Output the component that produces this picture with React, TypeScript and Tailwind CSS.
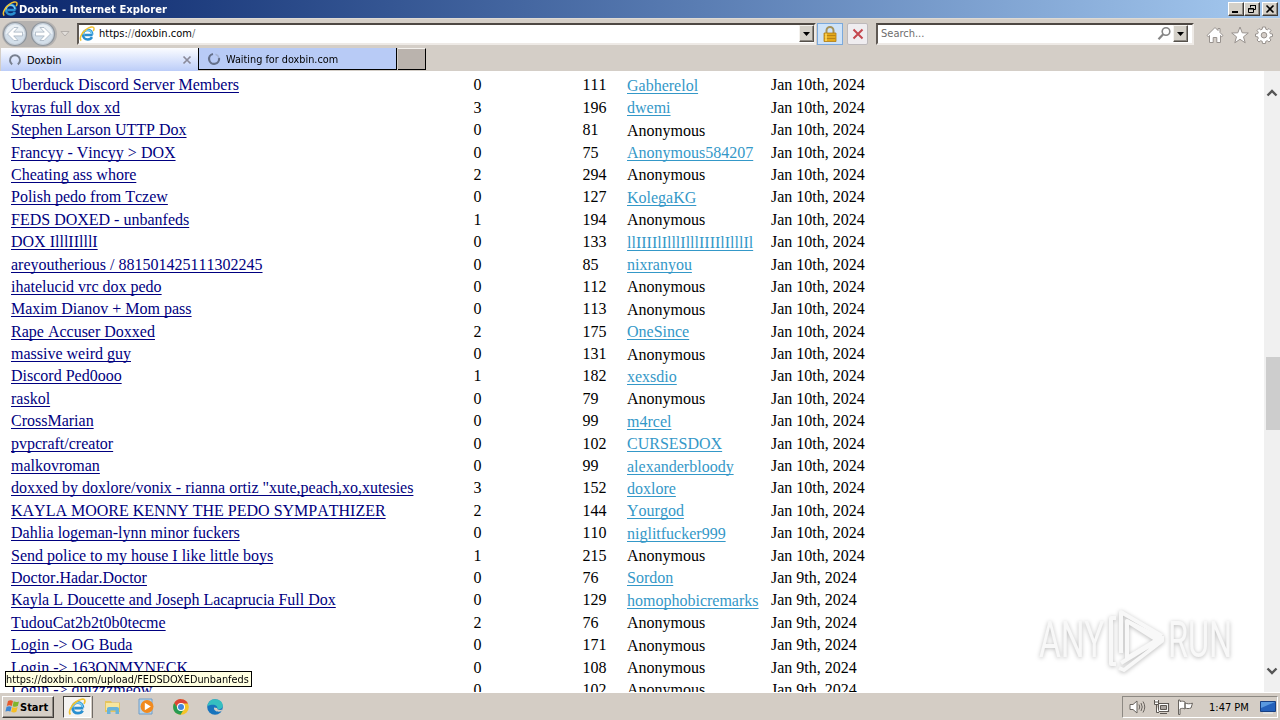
import type { ReactNode } from "react";
import clsx from "clsx";

type Paste = {
  title: string;
  comments: number;
  views: number;
  user?: string;
  date: string;
};

const JAN_10 = "Jan 10th, 2024";
const JAN_9 = "Jan 9th, 2024";

const pastes: Paste[] = [
  { title: "Uberduck Discord Server Members", comments: 0, views: 111, user: "Gabherelol", date: JAN_10 },
  { title: "kyras full dox xd", comments: 3, views: 196, user: "dwemi", date: JAN_10 },
  { title: "Stephen Larson UTTP Dox", comments: 0, views: 81, date: JAN_10 },
  { title: "Francyy - Vincyy > DOX", comments: 0, views: 75, user: "Anonymous584207", date: JAN_10 },
  { title: "Cheating ass whore", comments: 2, views: 294, date: JAN_10 },
  { title: "Polish pedo from Tczew", comments: 0, views: 127, user: "KolegaKG", date: JAN_10 },
  { title: "FEDS DOXED - unbanfeds", comments: 1, views: 194, date: JAN_10 },
  { title: "DOX IlllIIlllI", comments: 0, views: 133, user: "llIIIIlIlllIlllIIIIlIlllIl", date: JAN_10 },
  { title: "areyoutherious / 881501425111302245", comments: 0, views: 85, user: "nixranyou", date: JAN_10 },
  { title: "ihatelucid vrc dox pedo", comments: 0, views: 112, date: JAN_10 },
  { title: "Maxim Dianov + Mom pass", comments: 0, views: 113, date: JAN_10 },
  { title: "Rape Accuser Doxxed", comments: 2, views: 175, user: "OneSince", date: JAN_10 },
  { title: "massive weird guy", comments: 0, views: 131, date: JAN_10 },
  { title: "Discord Ped0ooo", comments: 1, views: 182, user: "xexsdio", date: JAN_10 },
  { title: "raskol", comments: 0, views: 79, date: JAN_10 },
  { title: "CrossMarian", comments: 0, views: 99, user: "m4rcel", date: JAN_10 },
  { title: "pvpcraft/creator", comments: 0, views: 102, user: "CURSESDOX", date: JAN_10 },
  { title: "malkovroman", comments: 0, views: 99, user: "alexanderbloody", date: JAN_10 },
  { title: "doxxed by doxlore/vonix - rianna ortiz \"xute,peach,xo,xutesies", comments: 3, views: 152, user: "doxlore", date: JAN_10 },
  { title: "KAYLA MOORE KENNY THE PEDO SYMPATHIZER", comments: 2, views: 144, user: "Yourgod", date: JAN_10 },
  { title: "Dahlia logeman-lynn minor fuckers", comments: 0, views: 110, user: "niglitfucker999", date: JAN_10 },
  { title: "Send police to my house I like little boys", comments: 1, views: 215, date: JAN_10 },
  { title: "Doctor.Hadar.Doctor", comments: 0, views: 76, user: "Sordon", date: JAN_9 },
  { title: "Kayla L Doucette and Joseph Lacaprucia Full Dox", comments: 0, views: 129, user: "homophobicremarks", date: JAN_9 },
  { title: "TudouCat2b2t0b0tecme", comments: 2, views: 76, date: JAN_9 },
  { title: "Login -> OG Buda", comments: 0, views: 171, date: JAN_9 },
  { title: "Login -> 163ONMYNECK", comments: 0, views: 108, date: JAN_9 },
  { title: "Login -> quizzzmeow", comments: 0, views: 102, date: JAN_9 },
];

function IeLogo({ className }: { className?: string }) {
  return (
    <svg className={className} viewBox="0 0 16 16" fill="none">
      <path d="M13.6 9H5.500M13.300 8.500C13.100 5.800 11.200 4 8.700 4S4 5.900 4 8.700s2 4.800 4.800 4.800c1.900 0 3.400-.8 4.200-2.300" stroke="#2a8fd0" strokeWidth="2.500" />
      <path d="M12.900 8C12.500 5.700 11 4.200 8.600 4.200S4.300 6 4.200 8.400" stroke="#7bd0f4" strokeWidth="1.200" />
      <path d="M2.200 14.600C-.2 12.500 3 6.500 7 3.600c3.300-2.500 7.600-3.700 8-1.400.2 1-.2 2-.8 3" stroke="#f2c230" strokeWidth="1.500" />
    </svg>
  );
}

function Spinner() {
  return (
    <svg className="size-3.5 shrink-0" viewBox="0 0 14 14" fill="none">
      <path d="M4.200 11.300A5 5 0 1 1 9.800 11.300" stroke="#777f8e" strokeWidth="2" />
    </svg>
  );
}

function WaitSpinner() {
  return (
    <svg className="size-3.5 shrink-0" viewBox="0 0 14 14" fill="none">
      <path d="M6 2A5 5 0 1 0 12 6" stroke="#64708a" strokeWidth="2.200" />
      <path d="M8.500 2.300A5 5 0 0 1 12 6" stroke="#a5b3d4" strokeWidth="1.500" />
    </svg>
  );
}

function NavArrow({ flip }: { flip?: boolean }) {
  return (
    <svg className={clsx("size-[26px] shrink-0", flip && "-scale-x-100")} viewBox="0 0 26 26">
      <circle cx="13" cy="13" r="11.500" fill="#c5ced8" stroke="#8e959d" strokeWidth="1.200" />
      <circle cx="13" cy="13" r="10" fill="#d3dfea" />
      <path d="M3.500 13a9.500 9.500 0 0 1 19 0z" fill="#e9eff4" />
      <path d="M5.500 13l6.500-6.500h4l-4.300 4.600H20.500v3.800h-8.800l4.300 4.600H12z" fill="#fff" stroke="#a6b3c0" strokeWidth=".8" />
    </svg>
  );
}

function DropButton() {
  return (
    <div className="flex h-[17px] w-[15px] shrink-0 items-center justify-center border border-t-[#f4f2ee] border-r-[#55504a] border-b-[#55504a] border-l-[#f4f2ee] bg-[#d4d0c8] shadow-[inset_-1px_-1px_0_#8d8983]">
      <svg className="h-1 w-[7px]" viewBox="0 0 7 4">
        <path d="M0 0h7L3.500 4z" fill="#000" />
      </svg>
    </div>
  );
}

function CaptionButton({ children, className }: { children: ReactNode; className?: string }) {
  return (
    <div
      className={clsx(
        "flex h-3.5 w-4 items-center justify-center border border-t-white border-r-[#403c38] border-b-[#403c38] border-l-white bg-[#d4d0c8] shadow-[inset_-1px_-1px_0_#8d8983]",
        className,
      )}
    >
      {children}
    </div>
  );
}

function TitleBar() {
  return (
    <div className="flex h-[18px] items-center bg-linear-to-r from-[#0b256b] to-[#a6caf0] pr-0.5 pl-0.5">
      <IeLogo className="size-4" />
      <span className="ml-px w-[180px] pt-0.5 text-[11px] font-bold whitespace-nowrap text-white">
        <span className="inline-block origin-left scale-x-[1.015]">Doxbin - Internet Explorer</span>
      </span>
      <div className="ml-auto flex">
        <CaptionButton>
          <svg className="h-2.5 w-2.5" viewBox="0 0 10 10">
            <path d="M1 7h6v2H1z" />
          </svg>
        </CaptionButton>
        <CaptionButton>
          <svg className="h-2.5 w-2.5" viewBox="0 0 10 10" fill="none" stroke="#000">
            <path d="M3.500 3.500V1.500h5v4H7M3 1.500h6M1.500 4.500h5v4h-5zM1 5h6" />
          </svg>
        </CaptionButton>
        <CaptionButton className="ml-0.5">
          <svg className="h-2.5 w-2.5" viewBox="0 0 10 10" fill="none" stroke="#000" strokeWidth="1.600">
            <path d="M1.500 1.500l7 7M8.500 1.500l-7 7" />
          </svg>
        </CaptionButton>
      </div>
    </div>
  );
}

function Toolbar() {
  return (
    <div className="flex h-[30px] items-center border-t border-[#dedad4] pl-0.5">
      <div className="flex w-[55px] gap-[2px] rounded-full bg-[#b5b2b0]">
        <NavArrow />
        <NavArrow flip />
      </div>
      <svg className="ml-[3px] h-1.5 w-2.5" viewBox="0 0 10 6">
        <path d="M1 .5h8L5 5z" fill="#e2deda" stroke="#aaa5a1" strokeWidth=".8" />
      </svg>
      <div className="ml-[7px] flex h-[22px] w-[739px] items-center border-2 border-t-[#4e4843] border-r-[#eeeae6] border-b-[#eeeae6] border-l-[#5f5954] bg-white">
        <IeLogo className="size-4" />
        <span className="ml-1 pt-0.5 text-[11px] text-[#777]">
          <span className="text-black">https:</span>//<span className="text-black">doxbin.com</span>/
        </span>
        <div className="ml-auto">
          <DropButton />
        </div>
      </div>
      <div className="ml-px flex h-[22px] w-[26px] items-center justify-center border border-[#7ba9dc] bg-[#cfe3f8]">
        <svg className="h-4 w-3.5" viewBox="0 0 14 16" fill="none">
          <path d="M3.500 8V4.500a3.500 3.500 0 0 1 7 0V8" stroke="#a5925a" strokeWidth="2" />
          <path d="M1 7h12v8.500H1z" fill="#e3a91c" stroke="#b07c12" strokeWidth=".8" />
          <path d="M1.500 9.500h11M1.500 12.500h11" stroke="#ba8415" />
          <path d="M3 7.500v7.500" stroke="#ffdb62" strokeWidth="1.500" />
        </svg>
      </div>
      <div className="ml-1 flex h-[22px] w-[21px] items-center justify-center rounded-xs border border-[#bdb9bb] bg-[#efedf0]">
        <svg className="size-3" viewBox="0 0 12 12">
          <path d="M1.500 1.500l9 9M10.500 1.500l-9 9" stroke="#c4474f" strokeWidth="2" />
        </svg>
      </div>
      <div className="ml-2 flex h-[22px] w-[318px] items-center border-2 border-t-[#4e4843] border-r-[#eeeae6] border-b-[#eeeae6] border-l-[#5f5954] bg-white pr-1">
        <span className="ml-[3px] pt-0.5 text-[11px] text-[#6d6d6d]">Search...</span>
        <svg className="ml-auto size-[15px]" viewBox="0 0 15 15" fill="none" stroke="#858585">
          <circle cx="9" cy="5.500" r="3.800" strokeWidth="1.600" />
          <path d="M6.200 8.300L1.500 13.300" strokeWidth="2.200" />
        </svg>
        <div className="ml-px">
          <DropButton />
        </div>
      </div>
      <div className="mt-[3px] ml-3 flex gap-[6.5px]">
        <svg className="size-[18px]" viewBox="0 0 18 18" fill="#fff" stroke="#98928e">
          <path d="M1 9.500L9 1.500l3 3v-2h2v4l3 3-1.300 1.200-1.200-1.200V16.500h-3.700v-5H7.200v5H3.500v-7l-1.200 1.200z" />
        </svg>
        <svg className="size-[18px]" viewBox="0 0 18 18" fill="#fff" stroke="#98928e">
          <path d="M9 1l2.200 5.800 6.100.2-4.800 3.800 1.700 6L9 13.300l-5.200 3.500 1.700-6L.7 7l6.100-.2z" />
        </svg>
        <svg className="size-[18px]" viewBox="0 0 18 18" fill="#fff" stroke="#98928e">
          <path d="M7.500 1h3l.3 2.200 1.500.6 1.700-1.300 2 2-1.300 1.700.6 1.500 2.200.3v2.500l-2.200.3-.6 1.500 1.300 1.700-2 2-1.700-1.300-1.500.6-.3 2.200h-3l-.3-2.200-1.500-.6L4 16l-2-2 1.300-1.700-.6-1.500L.5 10.500V8l2.200-.3.6-1.500L2 4.500l2-2 1.700 1.300 1.500-.6z" />
          <circle cx="9" cy="9.200" r="2.800" fill="#d4cdc7" />
        </svg>
      </div>
    </div>
  );
}

function TabStrip() {
  return (
    <div className="flex h-[23px] items-stretch pl-px text-[11px]">
      <div className="flex w-[197px] items-center bg-linear-to-b from-[#fbfcff] to-[#bccdf8] pr-1.5 pl-[7px]">
        <Spinner />
        <span className="ml-[5px] pt-[3px]">Doxbin</span>
        <svg className="ml-auto size-2.5" viewBox="0 0 10 10">
          <path d="M1.500 1.500l7 7M8.500 1.500l-7 7" stroke="#8a8a9a" strokeWidth="1.700" />
        </svg>
      </div>
      <div className="flex h-[22px] w-[199px] items-center border-r border-b border-l border-black bg-[#b8cbf6] pl-2">
        <WaitSpinner />
        <span className="ml-[5px] pt-1 whitespace-nowrap">
          <span className="inline-block origin-left scale-x-[.98]">Waiting for doxbin.com</span>
        </span>
      </div>
      <div className="ml-px h-[22px] w-[28px] border-t border-r border-b border-t-[#f4f1ed] border-r-black border-b-black bg-[#bab3ad]" />
    </div>
  );
}

function PasteRow({ paste }: { paste: Paste }) {
  return (
    <div className="grid h-[22.4px] grid-cols-[462.5px_109px_44.5px_144px_120px] pl-[11px] leading-[18px] whitespace-nowrap">
      <span className="text-[#000080] underline">{paste.title}</span>
      <span>{paste.comments}</span>
      <span>{paste.views}</span>
      <span className={clsx("pt-[.5px]", paste.user && "text-[#3498c8] underline")}>
        {paste.user ?? "Anonymous"}
      </span>
      <span>{paste.date}</span>
    </div>
  );
}

function ScrollBar() {
  return (
    <div className="flex w-4 shrink-0 flex-col items-center bg-[#f0f0f0]">
      <svg className="mt-[18px] h-2 w-3" viewBox="0 0 12 8" fill="none">
        <path d="M1.500 6.500L6 2l4.500 4.500" stroke="#555" strokeWidth="2.400" />
      </svg>
      <div className="mt-[260px] ml-px h-[73px] w-3.5 bg-[#cdcdcd]" />
      <svg className="mt-auto mb-[17px] h-2 w-3" viewBox="0 0 12 8" fill="none">
        <path d="M1.500 1.500L6 6l4.500-4.500" stroke="#555" strokeWidth="2.400" />
      </svg>
    </div>
  );
}

function Watermark() {
  return (
    <div className="absolute right-[47px] bottom-5 flex h-16 items-center text-[#f8f8f8] drop-shadow-[0_1px_2px_#bbb]">
      <span className="w-[66px] font-['Roboto'] text-[50px] leading-none">
        <span className="inline-block origin-left scale-x-[.67]">ANY</span>
      </span>
      <svg className="ml-0.5 h-16 w-[58px]" viewBox="0 0 58 64" fill="none" stroke="#f8f8f8" strokeWidth="4" strokeLinejoin="round">
        <path d="M14 45V4l41 24" />
        <path d="M20 13v37l33-20zM20 13l30 19M9 10H4v46h5M12 60l5 2 38-29v-5M14 55l38-23" />
      </svg>
      <span className="w-[68px] pl-[3px] font-['Roboto'] text-[50px] leading-none">
        <span className="inline-block origin-left scale-x-[.65]">RUN</span>
      </span>
    </div>
  );
}

function TaskBar() {
  return (
    <div className="flex h-7 items-center border-t border-white bg-[#d4cdc5] pr-0.5 pl-0.5">
      <div className="flex h-[22px] w-[52px] items-center border border-t-white border-r-[#403c38] border-b-[#403c38] border-l-white pl-0.5 shadow-[inset_-1px_-1px_0_#8d8983]">
        <svg className="size-[15px] shrink-0" viewBox="0 0 15 15">
          <path d="M3 2c2-1.300 3.500-.8 5 0L6.800 7C5 6 3.600 6 1.800 7z" fill="#e65a2c" />
          <path d="M8.700 2.300c1.800 1 3.600.9 5.300.1L12.800 7c-1.800 1-3.500.9-5.200.2z" fill="#80b52d" />
          <path d="M1.600 7.800C3.300 7 5 7 6.600 7.800l-1.200 4.800c-1.700-1-3.300-.8-5 0z" fill="#3d87d4" />
          <path d="M7.400 8c1.800.9 3.500.8 5.200 0l-1.200 4.800c-1.700.9-3.500.8-5.200 0z" fill="#f6be24" />
        </svg>
        <span className="pt-[3px] text-[11px] font-bold">Start</span>
      </div>
      <div className="ml-[9px] flex h-[22px] w-7 items-center justify-center border border-t-[#48443f] border-r-white border-b-white border-l-[#48443f] bg-[#f5f3f1]">
        <IeLogo className="size-[18px]" />
      </div>
      <div className="ml-px h-[22px] w-px bg-[#706b66]" />
      <svg className="ml-[11px] h-4 w-[17px]" viewBox="0 0 17 16">
        <path d="M1 2h6l1 1.500h8V13H1z" fill="#e5c45e" />
        <path d="M2 4h13v7H2z" fill="#f7e69d" />
        <path d="M3 15V9.500Q3 8 5 8h8q2 0 2 1.500V15h-3.500v-3.500h-5V15z" fill="#69b3d9" />
      </svg>
      <svg className="ml-[17px] size-[17px]" viewBox="0 0 17 17">
        <path d="M1 1h13v15H1z" fill="#b6d4ec" stroke="#6e9dc8" />
        <circle cx="9" cy="8.500" r="6.500" fill="#f18a1e" />
        <path d="M6.800 4.800v7.400l6-3.700z" fill="#fff" />
      </svg>
      <svg className="ml-[18px] size-4" viewBox="0 0 16 16">
        <circle cx="8" cy="8" r="7.800" fill="#f5c428" />
        <path d="M1.200 4A7.800 7.800 0 0 1 15 4.600H8L5 9.500z" fill="#dc4436" />
        <path d="M1.200 4A7.800 7.800 0 0 0 7.500 15.800L11 10 5 9.500z" fill="#289b52" />
        <circle cx="8" cy="8" r="4" fill="#fff" />
        <circle cx="8" cy="8" r="3" fill="#4285dc" />
      </svg>
      <svg className="ml-[18px] size-4" viewBox="0 0 16 16">
        <circle cx="8" cy="8" r="7.800" fill="#1874bd" />
        <path d="M.4 7C1.500 2 4.500.2 8 .2c5 0 8 3.300 7.800 6.800-.2 2.500-2.500 3.500-5.500 3 1-3.500-3.500-6-9.900-3z" fill="#35bfc0" />
        <path d="M7 8.500c-.5 3.500 3.500 5 7.500 3.700l1-1.700c-2 .8-5.700.5-5.500-1.500z" fill="#d4cdc5" />
      </svg>
      <div className="ml-auto flex h-[22px] w-[156px] items-center border border-t-[#8d8983] border-r-white border-b-white border-l-[#8d8983] pl-1.5">
        <svg className="h-4 w-[17px]" viewBox="0 0 17 16" fill="none" stroke="#69645f">
          <path d="M1 5.500h3L8 2v12l-4-3.500H1z" fill="#fff" />
          <path d="M10 5.500q1.500 2.500 0 5M12 4q2.500 4 0 8M14 2.500q3.500 5.500 0 11" />
        </svg>
        <svg className="ml-[7px] h-4 w-[17px]" viewBox="0 0 17 16" fill="none" stroke="#5d5853">
          <path d="M5.500 4.500h10v8h-10zM7 14.500h7" fill="#fff" strokeWidth="1.200" />
          <path d="M7.500 6.500h6v4h-6z" fill="#aaa49f" />
          <path d="M1.500 1v4.500h4V1M1.500 3h4M3.500 5.500v8H6" fill="#fff" />
        </svg>
        <svg className="ml-[7px] h-4 w-[17px]" viewBox="0 0 17 16" fill="#fff" stroke="#69645f">
          <path d="M1.500 1v14.500h1.500V10c2-1 3.500-.8 5 0V3C6.500 2 5 2 3 2.500V1zM8 4c2.500 1 4.500 1 7.500.2L14 9c-2 .8-4 .7-6 0z" />
        </svg>
        <span className="ml-[15px] pt-[3px] text-[11px] whitespace-nowrap">1:47 PM</span>
        <svg className="mr-px ml-auto h-3.5 w-4" viewBox="0 0 16 14">
          <path d="M.5 1.500h15v10H.5z" fill="#2461bb" stroke="#173f82" />
          <path d="M1 2h14L1 8z" fill="#5999df" />
          <path d="M3 13h10" stroke="#e9f1f8" />
        </svg>
      </div>
    </div>
  );
}

export default function App() {
  return (
    <div className="flex h-[720px] w-[1280px] flex-col overflow-hidden bg-[#d4cec7] font-['DejaVu_Sans_Condensed','DejaVu_Sans',sans-serif] text-black">
      <TitleBar />
      <Toolbar />
      <TabStrip />
      <div className="relative flex h-[621px] overflow-hidden bg-white">
        <div className="min-w-0 flex-1 pt-[5.4px] font-['Liberation_Serif',serif] text-[16px] underline-offset-2 [font-kerning:none] [text-decoration-skip-ink:none]">
          {pastes.map((paste) => (
            <PasteRow key={paste.title} paste={paste} />
          ))}
        </div>
        <ScrollBar />
        <Watermark />
        <div className="absolute bottom-[5px] left-[5px] flex h-4 w-[247px] items-center border border-black bg-[#ffffe1] pt-0.5 text-[11px] whitespace-nowrap">
          <span className="inline-block origin-left scale-x-[.984]">https://doxbin.com/upload/FEDSDOXEDunbanfeds</span>
        </div>
      </div>
      <TaskBar />
    </div>
  );
}
